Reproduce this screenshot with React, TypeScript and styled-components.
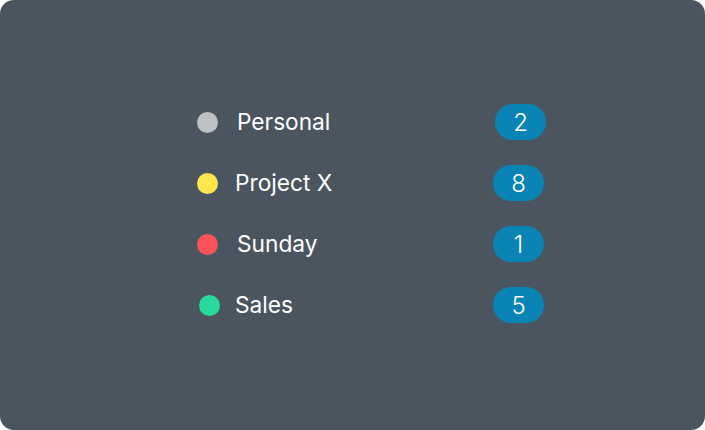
import styled, { createGlobalStyle } from "styled-components";

const GlobalStyle = createGlobalStyle`
    html, body {
        margin: 0;
        padding: 0;
        background: #ffffff;
    }
    body {
        font-family: Inter, "Liberation Sans", sans-serif;
    }
`;

const Panel = styled.div`
    width: 705px;
    height: 430px;
    box-sizing: border-box;
    background-color: #4a5560;
    border-radius: 14px;
    display: flex;
    align-items: flex-start;
    padding: 104px 0 0 197px;
`;

const List = styled.ul`
    list-style: none;
    margin: 0;
    padding: 0;
    width: 349px;
    display: flex;
    flex-direction: column;
    gap: 25px;
`;

const Row = styled.li`
    display: flex;
    align-items: center;
    height: 36px;
`;

const Dot = styled.span<{ color: string; shift: number }>`
    width: 21px;
    height: 21px;
    border-radius: 50%;
    background-color: ${props => props.color};
    margin-left: ${props => props.shift}px;
    flex-shrink: 0;
`;

const Label = styled.span<{ gapLeft: number }>`
    flex: 1;
    margin-left: ${props => props.gapLeft}px;
    margin-top: -2px;
    color: #ffffff;
    font-size: 22.7px;
    font-weight: 400;
`;

const Badge = styled.span<{ shift: number }>`
    width: 51px;
    height: 36px;
    border-radius: 18px;
    background-color: #0a84b4;
    color: #ffffff;
    font-size: 24px;
    font-weight: 300;
    display: flex;
    justify-content: center;
    align-items: center;
    margin-right: ${props => props.shift}px;
`;

const categories = [
    { name: "Personal", color: "#bec1c4", count: 2, dot: 0, text: 19, badge: 0 },
    { name: "Project X", color: "#fde74c", count: 8, dot: 0, text: 17, badge: 2 },
    { name: "Sunday", color: "#fa525b", count: 1, dot: 0, text: 19, badge: 2 },
    { name: "Sales", color: "#27d99b", count: 5, dot: 2, text: 15, badge: 2 },
];

export default function App() {
    return <>
        <GlobalStyle />
        <Panel>
            <List>
                {
                    categories.map(c => (
                        <Row key={c.name}>
                            <Dot color={c.color} shift={c.dot} />
                            <Label gapLeft={c.text}>{c.name}</Label>
                            <Badge shift={c.badge}>{c.count}</Badge>
                        </Row>
                    ))
                }
            </List>
        </Panel>
    </>;
}
